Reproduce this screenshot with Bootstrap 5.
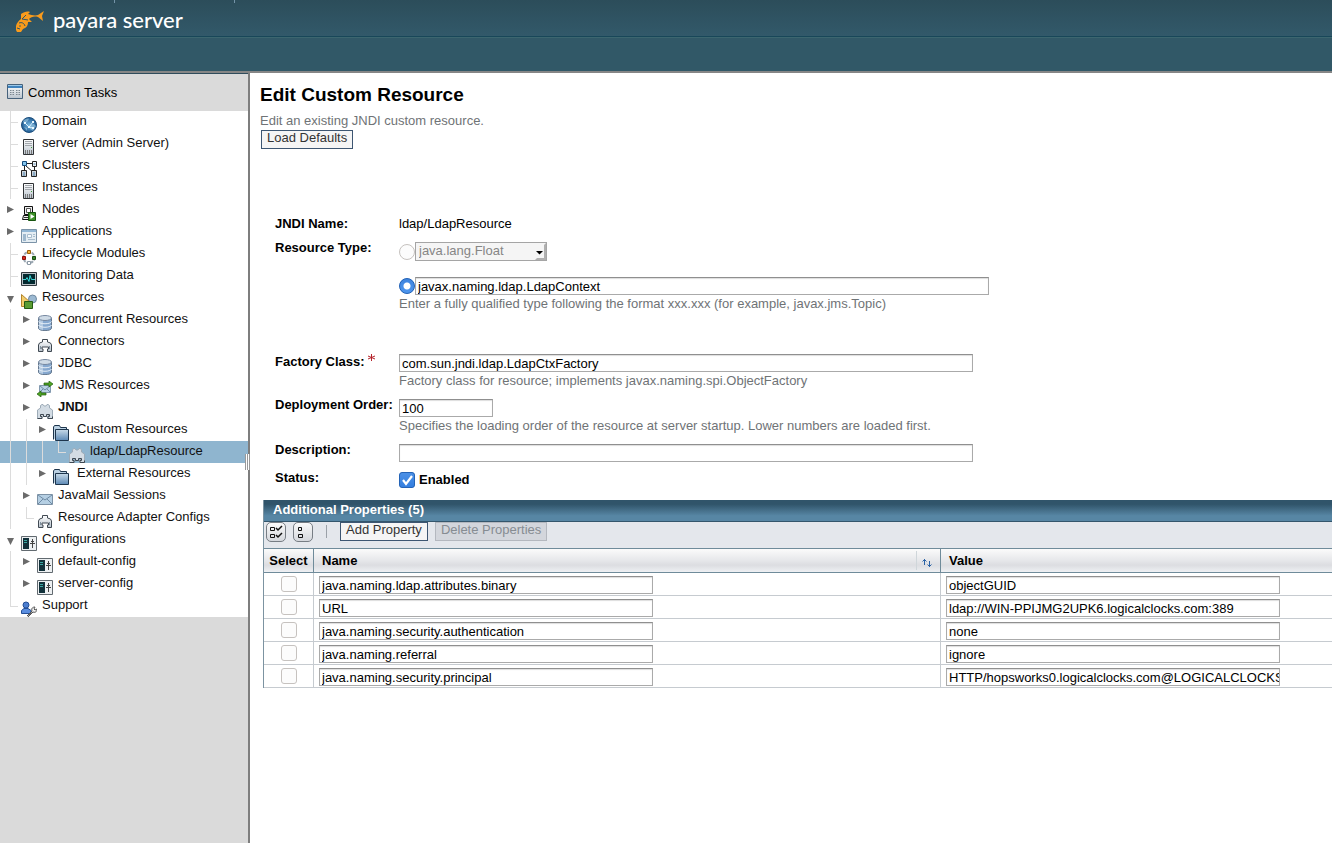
<!DOCTYPE html>
<html lang="en">
<head>
<meta charset="utf-8">
<meta name="viewport" content="width=device-width, initial-scale=1">
<title>Edit Custom Resource</title>
<link href="https://cdn.jsdelivr.net/npm/bootstrap@5.3.0/dist/css/bootstrap.min.css" rel="stylesheet">
<style>
body{font-family:"Liberation Sans",Arial,sans-serif;font-size:13px;line-height:16px;color:#000;background:#fff}
.mast-top{height:37px;background:linear-gradient(#2c4d5a,#32596a);border-bottom:1px solid #184759;padding-left:16px}
.mast-sub{height:36px;background:#315867;border-top:1px solid #3c666f;border-bottom:2px solid #868686}
.tick{top:0;width:1px;height:3px;background:#7494a8}
.wordmark{font-family:Lato,sans-serif;font-size:22px;line-height:24px;font-weight:500;color:#fff}
.side{width:250px;background:#dadada;border-right:2px solid #7e7e7e}
.side-title{height:38px;border-top:1px solid #2f4c5c;padding-left:7px;gap:5px}
.side-title .ico{margin-bottom:2px}
.tree li{height:22px;padding-left:2px}
.tree li.sel{background:#8fb5cf}
.tree a{color:#111;text-decoration:none;line-height:20px;padding-left:5px;white-space:nowrap}
.tree .fold+a{padding-left:8px}
.tree .ico{margin:6px 0 0 3px}
.ico{width:16px;height:16px;flex:none;overflow:visible}
.g{width:16px;height:22px;flex:none;background-repeat:no-repeat}
.g-v{background-image:linear-gradient(#dcdcdc,#dcdcdc);background-size:1px 22px;background-position:8px 0}
.g-t{background-image:linear-gradient(#dcdcdc,#dcdcdc),linear-gradient(#dcdcdc,#dcdcdc);background-size:1px 22px,8px 1px;background-position:8px 0,8px 11px}
.g-l{background-image:linear-gradient(#dcdcdc,#dcdcdc),linear-gradient(#dcdcdc,#dcdcdc);background-size:1px 11px,8px 1px;background-position:8px 0,8px 11px}
.twist{border:0;padding:0;background:none;color:#6b6b6b;display:flex}
.grip{right:-2px;top:381px;width:5px;height:16px;background:repeating-linear-gradient(90deg,#999 0 1px,#fff 1px 2px)}
.content{padding:10px 0 0 10px}
h1{font-size:19px;line-height:24px;font-weight:700;margin:0 0 6px}
.hint{color:#6f7376;margin:0}
.act{border:1px solid #3d5672;border-radius:0;background:#f5f5f5;color:#333;font-size:13px;line-height:14px;height:19px;padding:0 5px 3px}
.act:hover{background:#e9eef2;color:#222}
.act:disabled{border-color:#b4b8bf;background:#d3d6dc;color:#868c92;opacity:1}
.load{margin:1px 0 0 1px}
.form-area{padding:67px 0 0 15px}
.form-area .hint{margin-top:1px}
.lab{width:124px;flex:none;font-weight:700;white-space:nowrap}
.val{padding-top:2px}
.box{height:18px;border:1px solid #aaa;border-top-color:#8f8f8f;border-radius:0;padding:0 0 0 2px;font-size:13px;line-height:16px;color:#000;box-shadow:inset 0 1px 1px #ddd;background:#fff}
.box:focus{box-shadow:0 0 0 2px #8fb5cf}
.wide{max-width:574px}
.short{width:94px}
.pick{width:132px;height:19px;border:1px solid #a5a5a5;border-radius:0;padding:0 12px 2px 3px;font-size:13px;line-height:16px;color:#868686;appearance:none;background:#f5f5f5 url("data:image/svg+xml,%3Csvg xmlns='http://www.w3.org/2000/svg' width='11' height='17'%3E%3Cpath d='M11 0v17H0l2-2h7V2z' fill='%23b0b0b0'/%3E%3Cpath d='M1 8h7L4.500 11.500z' fill='%23000'/%3E%3C/svg%3E") no-repeat right top}
.pick:disabled{opacity:1}
.form-check-input{width:16px;height:16px;margin:0;flex:none;border:1px solid #c6c2bf;background-color:#fcfcfc}
.form-check-input[type=checkbox]{border-radius:3px}
.form-check-input:checked{border-color:#2463b6;background-color:#3883e2}
.form-check-input:checked[type=radio]{background-image:radial-gradient(circle,#fff 0 3px,transparent 4px),linear-gradient(#3e84de,#4e96ee)}
.form-check-input:checked[type=checkbox]{background-image:url("data:image/svg+xml,%3Csvg xmlns='http://www.w3.org/2000/svg' viewBox='0 0 14 14'%3E%3Cpath d='M3 7l3 4 6-8' fill='none' stroke='%23fff' stroke-width='2.200'/%3E%3C/svg%3E"),linear-gradient(#4b90e6,#347fe0)}
.grid-area{margin:12px 0 0 3px;border-left:1px solid #7c93a1}
.grid-title{height:22px;background:linear-gradient(#30546a 20%,#5786a4 75%);border-bottom:1px solid #34566c;color:#fff;font-size:13px;line-height:19px;font-weight:700;margin:0;padding-left:9px}
.tools{height:26px;background:#e4e7ec;padding-left:2px}
.tool{width:20px;height:20px;padding:0;border:1px solid #777d84;border-radius:5px;background:linear-gradient(#fafafa,#d5d8dd)}
.tool+.tool{margin-left:7px}
.act+.act{margin-left:7px}
.bar{width:1px;height:13px;background:#9ba1a8;margin:3px 13px 0}
.props{table-layout:fixed;width:100%;border-collapse:separate;border-spacing:0}
.props th{height:25px;padding:0 0 0 8px;border-top:1px solid #6f8b9a;border-bottom:1px solid #6f8b9a;background:linear-gradient(#fbfbfb,#e6e7ea 50%,#dcdde1 70%,#eef0f3)}
.props th+th{border-left:1px solid #6f8b9a}
.props th:first-child{padding:0;text-align:center}
.props td{height:23px;padding:3px 5px 1px;border-bottom:1px solid #c6cbd0}
.props td+td{border-left:1px solid #c6cbd0}
.props td:first-child{text-align:center}
.props .box{display:block;width:100%;max-width:334px}
.props .form-check-input{display:block;margin:0 auto 2px}
.c-sel{width:49px}.c-val{width:392px}
.sorter{width:24px;height:19px;border:0;border-left:1px solid #cfd6da;background:none;padding:4px 3px 0 0}
</style>
</head>
<body class="d-flex flex-column min-vh-100">
<svg width="0" height="0" class="position-absolute" aria-hidden="true">
<defs>
<linearGradient id="blu" x2="0" y2="1"><stop stop-color="#c8dbe9"/><stop offset="1" stop-color="#5c89b5"/></linearGradient>
<linearGradient id="gry" x2="0" y2="1"><stop stop-color="#fff"/><stop offset="1" stop-color="#b9c3cd"/></linearGradient>
<radialGradient id="orb"><stop stop-color="#78b8e0"/><stop offset="1" stop-color="#1f5b93"/></radialGradient>
</defs>
<symbol id="i-tasks" viewBox="0 0 16 16"><path d="M.5.5h15v14H.5z" fill="url(#gry)" stroke="#47627c"/><path d="M1 1h14v3H1z" fill="#3f82bd"/><path d="M1 1.500h14" stroke="#9cc8e8"/><path d="M3 6.500h4M9 6.500h4M3 8.500h4M9 8.500h4M3 10.500h4M9 10.500h4" stroke="#7b8791" stroke-dasharray="1 .5"/></symbol>
<symbol id="i-domain" viewBox="0 0 16 16"><circle cx="8" cy="8" r="7.500" fill="url(#orb)" stroke="#1d4f7d"/><path d="M2 4c2-2 5-3 6-2L6 5 3 7zM9 8l4-1 2 2-3 5-3-2zM3 10l3 1v3z" fill="#a9d3ea" opacity=".55"/><path d="M4 6l4 4 4-5M8 10l4 1" stroke="#d5efff" fill="none"/><path d="M3 5h2v2H3zM7 9h2v2H7zM11 4h2v2h-2zM11 10h2v2h-2z" fill="#eaf8ff"/></symbol>
<symbol id="i-server" viewBox="0 0 16 16"><path d="M2.500.5h10v15h-10z" fill="url(#gry)" stroke="#303336"/><path d="M4 2.500h7M4 4.500h7M4 6.500h7" stroke="#a2a7ac"/><path d="M10 8.500h1" stroke="#3f9c3a"/><path d="M4.500 11v4M6.500 11v4M8.500 11v4M10.500 11v4" stroke="#777"/></symbol>
<symbol id="i-cluster" viewBox="0 0 16 16"><path d="M6 2.500h5M3.500 5v4M5 5l7 6M13.500 5v4" stroke="#222" fill="none"/><g fill="url(#gry)" stroke="#222"><path d="M11.500.5h4v5h-4zM.5 9.500h5v6h-5zM10.500 9.500h5v6h-5z"/><path d="M1.500.5h4v4h-4z" fill="#83c5ed" stroke="#174c7c"/></g><path d="M2 12h2M12 12h2M12.500 3h2M2 14h2M12 14h2" stroke="#4d86b3"/></symbol>
<symbol id="i-node" viewBox="0 0 16 16"><path d="M3.500 1.500h8v8h-8zM2.500 10.500h9l2 4H1.500z" fill="#eee" stroke="#111"/><path d="M5.500 3.500h4v4h-4z" fill="#fff" stroke="#555"/><path d="M3 12.500h6" stroke="#333"/><path d="M7.500 7.500h7v8h-7z" fill="#3d9228" stroke="#17540f"/><path d="M9.500 9l4 2.500-4 2.500z" fill="#fff"/></symbol>
<symbol id="i-app" viewBox="0 0 16 16"><path d="M.5 2.500h15v13H.5z" fill="#e4edf3" stroke="#7b93a8"/><path d="M1 3h14v2H1z" fill="#92b7d5"/><path d="M2 7h3v7H2z" fill="#9fb9ce"/><path d="M6.500 7.500h4v3h-4zM12 7.500h2M12 9.500h2M7 12.500h7" stroke="#a8bdcd" fill="#f8fbfd"/></symbol>
<symbol id="i-life" viewBox="0 0 16 16"><circle cx="8" cy="8.500" r="5.500" fill="none" stroke="#9aa6b1" stroke-width="2" stroke-dasharray="3 1"/><path d="M6.500 1.500h3v3h-3z" fill="#f5b43b" stroke="#9a5f09"/><path d="M1.500 7.500h3v3h-3z" fill="#d62b20" stroke="#8c120d"/><path d="M11.500 7.500h3v3h-3z" fill="#39832c" stroke="#174d10"/><path d="M6.500 12.500h3v3h-3z" fill="#fff" stroke="#8a98a4"/></symbol>
<symbol id="i-mon" viewBox="0 0 16 16"><path d="M.5 1.500h15v13H.5z" fill="#b8c0c5" stroke="#31383d"/><path d="M2 3h12v10H2z" fill="#03292f"/><path d="M2 8.500h3l1-2 2 4 1-6 1.500 4H14" fill="none" stroke="#39d7d8"/></symbol>
<symbol id="i-res" viewBox="0 0 16 16"><circle cx="11.500" cy="6" r="4" fill="#9cb9d2" stroke="#7089a0"/><path d="M.5 1.500v12h5l4-4z" fill="#f3cd6b" stroke="#b3852b"/><path d="M3.500 8.500h8v7h-8z" fill="#5a9c32" stroke="#245a13"/></symbol>
<symbol id="i-db" viewBox="0 0 16 16"><path d="M1.500 3v10c0 3.500 13 3.500 13 0V3" fill="#86a8cf" stroke="#64788f"/><path d="M2 3h4v12l-4-1z" fill="#c9daea" opacity=".7"/><path d="M1.500 6.500c1 3 12 3 13 0M1.500 10c1 3 12 3 13 0" fill="none" stroke="#e6eff8"/><ellipse cx="8" cy="3" rx="6.500" ry="2.500" fill="#cfdbe6" stroke="#7688a0"/></symbol>
<symbol id="i-conn" viewBox="0 0 16 16"><path d="M5.500 5V2.500h5V5l3 1 1 2v6.500h-4V12h1v-2H5v2h1v2.500H1.500V8l1-2z" fill="url(#gry)" stroke="#404952"/><path d="M3.500 9v3M12.500 9v3" stroke="#7f909e"/></symbol>
<symbol id="i-jms" viewBox="0 0 16 16"><path d="M2.500 4.500h11v7h-11z" fill="#b9d1e5" stroke="#8299af"/><path d="M3 5l5 4 5-4M3 11l3-3M13 11l-3-3" fill="none" stroke="#6d8aa5"/><path d="M7 2h5V0l4 3-4 3V4H7zM9 12H4v-2l-4 3 4 3v-2h5z" fill="#51a522" stroke="#205d10" stroke-width=".7"/></symbol>
<symbol id="i-jndi" viewBox="0 0 16 16"><path d="M3.500 5V2.500L5 1.500h1L7 3h2l1-1.500h1l1.500 1V5l3 2v8.500h-5v-2h1v-2H10v2h-4v-2H4v2h1v2H.5V7z" fill="#d3dce4" stroke="#9dabb7"/><path d="M.5 15.500H5v-2H3.500v-2h3v2h3v-2h3v2H11v2h4.500v-2" fill="none" stroke="#3d4751"/></symbol>
<symbol id="i-folder" viewBox="0 0 16 16"><path d="M.5 14.500V2l1-1.500h5l1 2h6V5" fill="#bad0e2" stroke="#1d354c"/><path d="M2.500 4.500h13v11h-13z" fill="url(#blu)" stroke="#1d354c"/></symbol>
<symbol id="i-mail" viewBox="0 0 16 16"><path d="M.5 3.500h15v10H.5z" fill="#b5cfe3" stroke="#7d92a6"/><path d="M1 4l7 5 7-5M1 13l5-5M15 13l-5-5" fill="none" stroke="#6f8ba5"/></symbol>
<symbol id="i-conf" viewBox="0 0 16 16"><path d="M.5 1.500h15v14H.5z" fill="#edf0f2" stroke="#626a70"/><path d="M2 3h6v11H2z" fill="#12313a"/><path d="M3 5.500h3M3 7.500h3" stroke="#39a7a2"/><path d="M11.500 4v9M9 8.500h5M10 6.500h3" stroke="#444"/></symbol>
<symbol id="i-supp" viewBox="0 0 16 16"><circle cx="5" cy="4" r="3" fill="#4c7ed0" stroke="#234e96"/><path d="M.5 12.500V9.500L3 7.500h4l3 2v3z" fill="#5b8ee0" stroke="#234e96"/><path d="M6 15l5-5M11 10c-1-3 1-4 3-4l-1 2 1 1 2-1c0 2-1 4-4 3l-5 5z" fill="#f3f3f3" stroke="#555"/></symbol>
<symbol id="t-right" viewBox="0 0 16 22"><path d="M5 7v7l7-3.500z" fill="currentColor"/></symbol>
<symbol id="t-down" viewBox="0 0 16 22"><path d="M5 9h7l-3.500 7z" fill="currentColor"/></symbol>
</svg>

<header class="flex-shrink-0">
  <div class="mast-top d-flex align-items-center position-relative">
    <span class="tick position-absolute" style="left:114px"></span><span class="tick position-absolute" style="left:234px"></span>
    <svg width="29" height="22" viewBox="0 0 29 22" class="flex-shrink-0 mt-2" aria-hidden="true"><path d="M5 3C8 1 11 0 14 1l-2 2c3 1 7 2 10 1l6-4-2 5 1 5-5-4c-4-1-7 0-9 2l3 3-4 0c0 4-2 6-5 7l-2 3H1l-1-2c-1-5 2-9 5-11z" fill="#f99b1c"/><path d="M1 17l3 1M3 12c3-1 5 0 6 3M10 4L6 8l6 1" stroke="#315463" fill="none"/><circle cx="4" cy="15" r=".8" fill="#315463"/></svg>
    <span class="wordmark ms-2 mt-1">payara server</span>
  </div>
  <div class="mast-sub"></div>
</header>

<div class="d-flex flex-grow-1">
<nav class="side flex-shrink-0 position-relative" aria-label="Common Tasks">
  <div class="side-title d-flex align-items-center"><svg class="ico"><use href="#i-tasks"/></svg><span>Common Tasks</span></div>
  <ul class="tree list-unstyled bg-white m-0">
    <li class="d-flex"><i class="g g-t"></i><svg class="ico"><use href="#i-domain"/></svg><a href="#">Domain</a></li>
    <li class="d-flex"><i class="g g-t"></i><svg class="ico"><use href="#i-server"/></svg><a href="#">server (Admin Server)</a></li>
    <li class="d-flex"><i class="g g-t"></i><svg class="ico"><use href="#i-cluster"/></svg><a href="#">Clusters</a></li>
    <li class="d-flex"><i class="g g-t"></i><svg class="ico"><use href="#i-server"/></svg><a href="#">Instances</a></li>
    <li class="d-flex"><button class="twist" aria-label="Expand Nodes"><svg class="g"><use href="#t-right"/></svg></button><svg class="ico"><use href="#i-node"/></svg><a href="#">Nodes</a></li>
    <li class="d-flex"><button class="twist" aria-label="Expand Applications"><svg class="g"><use href="#t-right"/></svg></button><svg class="ico"><use href="#i-app"/></svg><a href="#">Applications</a></li>
    <li class="d-flex"><i class="g g-t"></i><svg class="ico"><use href="#i-life"/></svg><a href="#">Lifecycle Modules</a></li>
    <li class="d-flex"><i class="g g-t"></i><svg class="ico"><use href="#i-mon"/></svg><a href="#">Monitoring Data</a></li>
    <li class="d-flex"><button class="twist" aria-label="Collapse Resources"><svg class="g"><use href="#t-down"/></svg></button><svg class="ico"><use href="#i-res"/></svg><a href="#">Resources</a></li>
    <li class="d-flex"><i class="g g-v"></i><button class="twist" aria-label="Expand Concurrent Resources"><svg class="g"><use href="#t-right"/></svg></button><svg class="ico"><use href="#i-db"/></svg><a href="#">Concurrent Resources</a></li>
    <li class="d-flex"><i class="g g-v"></i><button class="twist" aria-label="Expand Connectors"><svg class="g"><use href="#t-right"/></svg></button><svg class="ico"><use href="#i-conn"/></svg><a href="#">Connectors</a></li>
    <li class="d-flex"><i class="g g-v"></i><button class="twist" aria-label="Expand JDBC"><svg class="g"><use href="#t-right"/></svg></button><svg class="ico"><use href="#i-db"/></svg><a href="#">JDBC</a></li>
    <li class="d-flex"><i class="g g-v"></i><button class="twist" aria-label="Expand JMS Resources"><svg class="g"><use href="#t-right"/></svg></button><svg class="ico"><use href="#i-jms"/></svg><a href="#">JMS Resources</a></li>
    <li class="d-flex"><i class="g g-v"></i><button class="twist" aria-label="Collapse JNDI"><svg class="g"><use href="#t-right"/></svg></button><svg class="ico"><use href="#i-jndi"/></svg><a href="#" class="fw-bold">JNDI</a></li>
    <li class="d-flex"><i class="g g-v"></i><i class="g g-v"></i><button class="twist" aria-label="Collapse Custom Resources"><svg class="g"><use href="#t-right"/></svg></button><svg class="ico fold"><use href="#i-folder"/></svg><a href="#">Custom Resources</a></li>
    <li class="d-flex sel"><i class="g g-v"></i><i class="g g-v"></i><i class="g g-v"></i><i class="g g-l"></i><svg class="ico"><use href="#i-jndi"/></svg><a href="#" aria-current="page">ldap/LdapResource</a></li>
    <li class="d-flex"><i class="g g-v"></i><i class="g g-v"></i><button class="twist" aria-label="Expand External Resources"><svg class="g"><use href="#t-right"/></svg></button><svg class="ico fold"><use href="#i-folder"/></svg><a href="#">External Resources</a></li>
    <li class="d-flex"><i class="g g-v"></i><button class="twist" aria-label="Expand JavaMail Sessions"><svg class="g"><use href="#t-right"/></svg></button><svg class="ico"><use href="#i-mail"/></svg><a href="#">JavaMail Sessions</a></li>
    <li class="d-flex"><i class="g g-v"></i><i class="g g-l"></i><svg class="ico"><use href="#i-conn"/></svg><a href="#">Resource Adapter Configs</a></li>
    <li class="d-flex"><button class="twist" aria-label="Collapse Configurations"><svg class="g"><use href="#t-down"/></svg></button><svg class="ico"><use href="#i-conf"/></svg><a href="#">Configurations</a></li>
    <li class="d-flex"><i class="g g-v"></i><button class="twist" aria-label="Expand default-config"><svg class="g"><use href="#t-right"/></svg></button><svg class="ico"><use href="#i-conf"/></svg><a href="#">default-config</a></li>
    <li class="d-flex"><i class="g g-v"></i><button class="twist" aria-label="Expand server-config"><svg class="g"><use href="#t-right"/></svg></button><svg class="ico"><use href="#i-conf"/></svg><a href="#">server-config</a></li>
    <li class="d-flex"><i class="g g-l"></i><svg class="ico"><use href="#i-supp"/></svg><a href="#">Support</a></li>
  </ul>
  <span class="grip position-absolute"></span>
</nav>

<main class="content flex-grow-1">
  <h1>Edit Custom Resource</h1>
  <p class="hint">Edit an existing JNDI custom resource.</p>
  <button type="button" class="act load d-block">Load Defaults</button>

  <form class="form-area">
    <div class="d-flex mb-2"><span class="lab">JNDI Name:</span><span>ldap/LdapResource</span></div>
    <div class="d-flex mb-4">
      <label class="lab" for="rtype">Resource Type:</label>
      <div class="val flex-grow-1 pb-3">
        <div class="d-flex align-items-center mb-3"><input class="form-check-input" type="radio" name="kind" aria-label="Predefined type"><select id="rtype" class="pick" disabled><option>java.lang.Float</option></select></div>
        <div class="d-flex align-items-center"><input class="form-check-input" type="radio" name="kind" checked aria-label="Other type"><input class="box wide w-100" aria-label="Type name" value="javax.naming.ldap.LdapContext"></div>
        <p class="hint">Enter a fully qualified type following the format xxx.xxx (for example, javax.jms.Topic)</p>
      </div>
    </div>
    <div class="d-flex mb-2">
      <label class="lab val" for="factory">Factory Class: <svg width="7" height="8" viewBox="0 0 7 8" class="align-top" aria-label="required"><path d="M3.500 0v7M0 2l7 3M7 2L0 5" stroke="#b5232b"/></svg></label>
      <div class="val flex-grow-1"><input id="factory" class="box wide w-100 d-block" value="com.sun.jndi.ldap.LdapCtxFactory"><p class="hint">Factory class for resource; implements javax.naming.spi.ObjectFactory</p></div>
    </div>
    <div class="d-flex mb-2">
      <label class="lab" for="order">Deployment Order:</label>
      <div class="val flex-grow-1"><input id="order" class="box short d-block" value="100"><p class="hint">Specifies the loading order of the resource at server startup. Lower numbers are loaded first.</p></div>
    </div>
    <div class="d-flex mb-2">
      <label class="lab" for="descr">Description:</label>
      <div class="val flex-grow-1"><input id="descr" class="box wide w-100 d-block"></div>
    </div>
    <div class="d-flex">
      <span class="lab">Status:</span>
      <div class="val d-flex"><input id="on" class="form-check-input" type="checkbox" checked><label for="on" class="fw-bold ps-1">Enabled</label></div>
    </div>
  </form>

  <section class="grid-area">
    <h2 class="grid-title">Additional Properties (5)</h2>
    <div class="tools d-flex align-items-start">
      <button type="button" class="tool d-flex" aria-label="Select all"><svg width="18" height="18" fill="none" stroke="#111"><path d="M3.500 4.500h4v3h-4zM3.500 11.500h4v3h-4z"/><path d="M9 5l2 2 4-4M9 12l2 2 4-4" stroke-width="1.500"/></svg></button>
      <button type="button" class="tool d-flex" aria-label="Deselect all"><svg width="18" height="18" fill="none" stroke="#111"><path d="M4.500 4.500h3v3h-3zM4.500 11.500h4v3h-4z"/></svg></button>
      <span class="bar"></span>
      <button type="button" class="act">Add Property</button>
      <button type="button" class="act" disabled>Delete Properties</button>
    </div>
    <table class="props">
      <colgroup><col class="c-sel"><col><col class="c-val"></colgroup>
      <thead><tr><th>Select</th><th><div class="d-flex align-items-center justify-content-between">Name<button type="button" class="sorter" aria-label="Sort by name"><svg class="d-block mx-auto" width="10" height="10" fill="none" stroke="#2a62a6"><path d="M2.500 7V1M.5 3.500l2-2 2 2M7.500 3v6M5.500 6.500l2 2 2-2"/></svg></button></div></th><th>Value</th></tr></thead>
      <tbody>
        <tr><td><input class="form-check-input" type="checkbox" aria-label="Select row 1"></td><td><input class="box" aria-label="Name 1" value="java.naming.ldap.attributes.binary"></td><td><input class="box" aria-label="Value 1" value="objectGUID"></td></tr>
        <tr><td><input class="form-check-input" type="checkbox" aria-label="Select row 2"></td><td><input class="box" aria-label="Name 2" value="URL"></td><td><input class="box" aria-label="Value 2" value="ldap://WIN-PPIJMG2UPK6.logicalclocks.com:389"></td></tr>
        <tr><td><input class="form-check-input" type="checkbox" aria-label="Select row 3"></td><td><input class="box" aria-label="Name 3" value="java.naming.security.authentication"></td><td><input class="box" aria-label="Value 3" value="none"></td></tr>
        <tr><td><input class="form-check-input" type="checkbox" aria-label="Select row 4"></td><td><input class="box" aria-label="Name 4" value="java.naming.referral"></td><td><input class="box" aria-label="Value 4" value="ignore"></td></tr>
        <tr><td><input class="form-check-input" type="checkbox" aria-label="Select row 5"></td><td><input class="box" aria-label="Name 5" value="java.naming.security.principal"></td><td><input class="box" aria-label="Value 5" value="HTTP/hopsworks0.logicalclocks.com@LOGICALCLOCKS.COM"></td></tr>
      </tbody>
    </table>
  </section>
</main>
</div>
<script src="https://cdn.jsdelivr.net/npm/bootstrap@5.3.0/dist/js/bootstrap.bundle.min.js"></script>
</body>
</html>
